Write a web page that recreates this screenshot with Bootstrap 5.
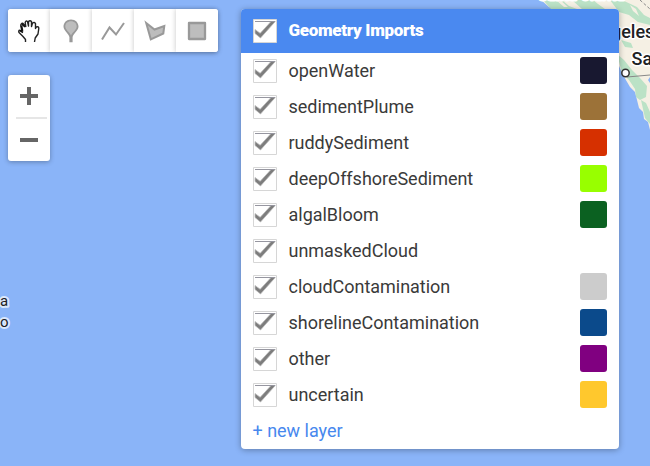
<!DOCTYPE html>
<html lang="en">
<head>
<meta charset="utf-8">
<meta name="viewport" content="width=device-width, initial-scale=1">
<title>Geometry Imports</title>
<link href="https://cdn.jsdelivr.net/npm/bootstrap@5.3.0/dist/css/bootstrap.min.css" rel="stylesheet">
<style>
body{font-family:Roboto,sans-serif;background:#8ab4f8;height:466px}
.map-base{position:absolute;inset:0;z-index:0}
.map-ui{position:relative;z-index:1;padding:9px 31px 0 8px}
.ctl{background:#fff;border-radius:3px;box-shadow:0 1px 5px rgba(0,0,0,.3)}
.tool{width:42px;height:43px;background:#fff;border:0}
.tool+.tool{box-shadow:-1px 0 4px rgba(0,0,0,.16)}
.tool:first-child{border-radius:3px 0 0 3px}
.tool:last-child{border-radius:0 3px 3px 0}
.zoomer{width:42px;height:86px;margin-top:23px}
.zoomer button{height:42px;background:none;border:0}
.zoomer hr{height:2px;border:0;background:#e6e6e6;opacity:1;margin:0 3px 0 8px}
.panel{width:378px;height:440px;border-radius:4px;box-shadow:0 1px 6px rgba(0,0,0,.32)}
.panel-head{height:44px;background:#4a89f0;color:#fff;font-weight:900;font-size:17px;letter-spacing:-.33px;padding:0 12px}
.layer-row{height:36px;padding:0 12px;font-size:18px;color:#3a3a3a;line-height:36px;letter-spacing:-.02px}
.tick{width:24px;height:24px;margin-right:11.500px;flex:none}
.swatch{width:27px;height:27px;border-radius:3px;margin-top:-1px}
.new-layer{color:#4788ee;text-decoration:none;margin-left:-.5px}
</style>
<script src="https://cdn.jsdelivr.net/npm/bootstrap@5.3.0/dist/js/bootstrap.bundle.min.js"></script>
</head>
<body class="position-relative overflow-hidden m-0">
<svg class="map-base" width="650" height="466" viewBox="0 0 650 466" aria-hidden="true">
<path fill="#f5f0e4" d="M541 0L549 7 560 12 600 30 617 54 619 66 623 75 630 87 635 92 637 100 639 108 643 112 644 119 648 122 650 130V0Z"/>
<path fill="#bbe2c6" d="M543 0H562L569 6 577 9H551ZM572 0H593L598 4 605 9H582ZM610 0H622L637 7 644 15 650 18V25L638 22 629 15 619 12ZM621 40L631 43 633 48 625 47ZM617 54L624 60 632 70 640 78 647 86 646 97 640 100 636 97 635 89 629 80 622 73ZM641 100L646 103 650 112V124L645 118Z"/>
<path fill="#f5f0e4" d="M556 0h4l8 7h-4zM630 5l6 4 3 7-6-5z"/>
<path d="M640 0L650 9" stroke="#888" stroke-dasharray="3 2" fill="none"/>
<path fill="#8ab4f8" d="M648 80l2-3v6z"/>
<path d="M627 77L650 75" stroke="#888" fill="none"/>
<circle cx="625.5" cy="73" r="3.700" fill="#fff" stroke="#333" stroke-width="1.500"/>
<g font-family="Roboto,sans-serif" font-weight="500" fill="#202124" stroke="#fff" stroke-width="3" stroke-linejoin="round" paint-order="stroke">
<text x="538" y="0" font-size="15" fill="#ddd">Santa Clarita</text>
<text x="611" y="37.500" font-size="18">geles</text>
<text x="631.5" y="64.500" font-size="18">Sa</text>
<g font-size="15" font-weight="400" stroke="#d9e7fc" stroke-width="4"><text x="0" y="306">a</text><text x="0" y="327">o</text></g>
</g>
</svg>
<svg class="d-none" aria-hidden="true"><defs>
<symbol id="tick" viewBox="0 0 24 24"><path fill="#fff" stroke="#d6d6d6" d="M.5.5h23v23H.5z"/><path d="M2 10.500L7.200 14.300 18 2.500H22.300L7.500 19 2 14.500Z" fill="#7d7d7d" stroke="#bbb" stroke-width=".8"/><path d="M2 2.500H22" stroke="#9696a0"/></symbol>
</defs></svg>
<div class="map-ui d-flex justify-content-between align-items-start">
<div>
<div class="ctl d-flex" role="toolbar">
<button class="tool p-0 d-flex align-items-center justify-content-center" aria-label="Pan"><svg width="24" height="24" viewBox="0 0 24 24"><path fill="#fff" stroke="#222" stroke-width="1.400" stroke-linejoin="round" d="M8.500 23v-2.500L6 17.500 2 13.500Q1.200 11.500 2.800 11.300L5 12 3.800 7Q3.500 4.500 5.800 4.300L8.800 7.500 8.200 3.500Q8.800 1.300 10.500 2.500L11.500 7V2.500Q13 .9 14.500 2.500V7.500L15.500 4Q17.500 2.800 18.500 4.500V9.500L19.300 8Q21.800 7.200 21.800 9.500L21 15 18.200 19 17.500 23"/><path d="M4.500 6.500l1 5.500M3 11.500l3 2M5 5l3 3" stroke="#111" stroke-width="1.700"/></svg></button>
<button class="tool p-0 d-flex align-items-center justify-content-center" aria-label="Add a marker"><svg width="24" height="24" viewBox="0 0 24 24"><path d="M12 .5C7.500.5 4.500 3.800 4.500 7.600c0 4 4.700 6.400 5.900 10.400v5.300h3.200V18c1.200-4 5.900-6.400 5.900-10.400C19.500 3.800 16.500.5 12 .5z" fill="#999"/><path d="M12 2.300C8.500 2.300 6.300 4.700 6.300 7.600c0 3 4.200 5.900 5.700 8.800 1.500-2.900 5.700-5.800 5.700-8.800C17.700 4.700 15.500 2.300 12 2.300z" fill="#bdbdbd"/></svg></button>
<button class="tool p-0 d-flex align-items-center justify-content-center" aria-label="Draw a line"><svg width="24" height="24" viewBox="0 0 24 24"><path d="M1 20.500L8.500 8.500 15 15.500 23 4" fill="none" stroke="#999" stroke-width="2"/></svg></button>
<button class="tool p-0 d-flex align-items-center justify-content-center" aria-label="Draw a shape"><svg width="24" height="24" viewBox="0 0 24 24"><path d="M3.200 4L11.500 10.500 21.300 7 20.300 14.500 7.800 20.300Z" fill="#bdbdbd" stroke="#999" stroke-width="2"/></svg></button>
<button class="tool p-0 d-flex align-items-center justify-content-center" aria-label="Draw a rectangle"><svg width="24" height="24" viewBox="0 0 24 24"><rect x="4" y="4" width="16" height="16" fill="#bdbdbd" stroke="#999" stroke-width="2.300" stroke-linejoin="round"/></svg></button>
</div>
<div class="ctl zoomer d-flex flex-column">
<button class="p-0 d-flex align-items-center justify-content-center" aria-label="Zoom in"><svg width="18" height="18"><path d="M0 9h18M9 0v18" stroke="#666" stroke-width="4"/></svg></button>
<hr>
<button class="p-0 d-flex align-items-center justify-content-center" aria-label="Zoom out"><svg width="18" height="18"><path d="M0 9h18" stroke="#666" stroke-width="4"/></svg></button>
</div>
</div>
<section class="panel bg-white overflow-hidden">
<header class="panel-head d-flex align-items-center"><svg class="tick"><use href="#tick"/></svg><span>Geometry Imports</span></header>
<div class="layer-row d-flex align-items-center"><svg class="tick"><use href="#tick"/></svg><span>openWater</span><i class="swatch ms-auto" style="background:#181830"></i></div>
<div class="layer-row d-flex align-items-center"><svg class="tick"><use href="#tick"/></svg><span>sedimentPlume</span><i class="swatch ms-auto" style="background:#9c7238"></i></div>
<div class="layer-row d-flex align-items-center"><svg class="tick"><use href="#tick"/></svg><span>ruddySediment</span><i class="swatch ms-auto" style="background:#d63000"></i></div>
<div class="layer-row d-flex align-items-center"><svg class="tick"><use href="#tick"/></svg><span>deepOffshoreSediment</span><i class="swatch ms-auto" style="background:#98ff00"></i></div>
<div class="layer-row d-flex align-items-center"><svg class="tick"><use href="#tick"/></svg><span>algalBloom</span><i class="swatch ms-auto" style="background:#0b6121"></i></div>
<div class="layer-row d-flex align-items-center"><svg class="tick"><use href="#tick"/></svg><span>unmaskedCloud</span></div>
<div class="layer-row d-flex align-items-center"><svg class="tick"><use href="#tick"/></svg><span>cloudContamination</span><i class="swatch ms-auto" style="background:#ccc"></i></div>
<div class="layer-row d-flex align-items-center"><svg class="tick"><use href="#tick"/></svg><span>shorelineContamination</span><i class="swatch ms-auto" style="background:#0b4a8b"></i></div>
<div class="layer-row d-flex align-items-center"><svg class="tick"><use href="#tick"/></svg><span>other</span><i class="swatch ms-auto" style="background:#800080"></i></div>
<div class="layer-row d-flex align-items-center"><svg class="tick"><use href="#tick"/></svg><span>uncertain</span><i class="swatch ms-auto" style="background:#ffc82d"></i></div>
<div class="layer-row"><a class="new-layer" href="#">+ new layer</a></div>
</section>
</div>
</body>
</html>
